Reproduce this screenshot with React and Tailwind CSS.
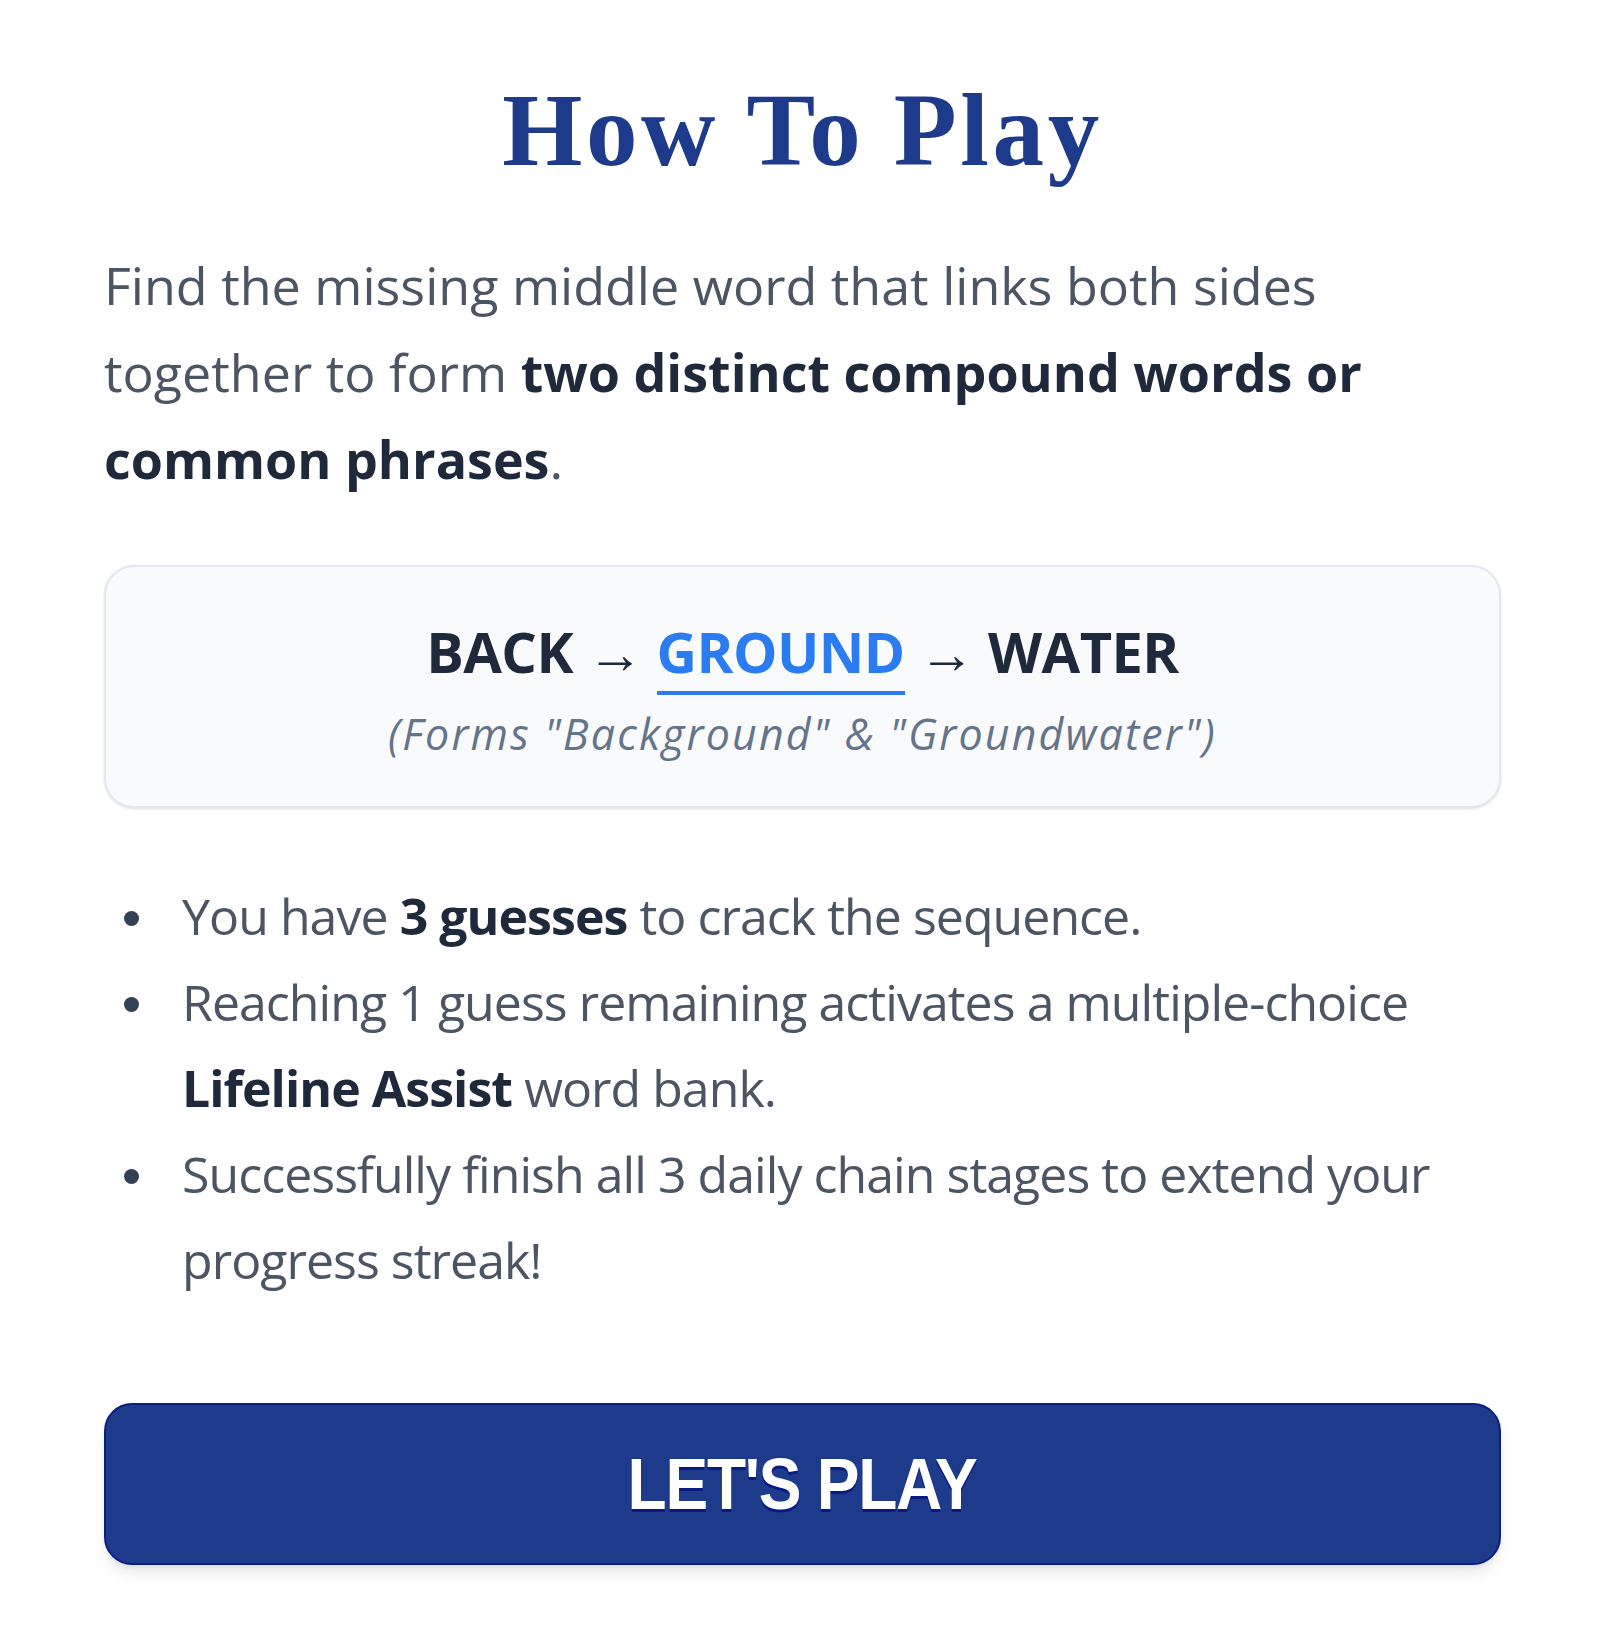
import React from "react";

const Bullet = ({ children }) => {
  return (
    <li className="flex">
      <div className="w-[78px] shrink-0 pl-[20px] pt-[38px]">
        <span className="block w-[15px] h-[15px] rounded-full bg-[#334155]"></span>
      </div>
      <div className="flex-1">{children}</div>
    </li>
  );
};

const HowToPlay = () => {
  return (
    <div className="min-h-screen bg-white">
      <div className="w-[1397px] ml-[104px] pt-[74px] pb-[67px]">
        {/* title */}
        <h1 className="text-center text-[103px] leading-[112px] font-bold text-[#1e3a8a] font-['Liberation_Serif',serif] tracking-[0.035em]">
          How To Play
        </h1>

        {/* intro */}
        <p className="mt-[55px] text-[52px] leading-[87px] text-[#4b5563] font-['Open_Sans',sans-serif]">
          Find the missing middle word that links both sides together to form{" "}
          <strong className="font-bold text-[#1e293b]">
            two distinct compound words or common phrases
          </strong>
          .
        </p>

        {/* example */}
        <div className="mt-[63px] h-[243px] rounded-[30px] border-2 border-[#e2e8f0] bg-[#f8fafc] shadow-sm flex flex-col items-center pt-[48px] font-['Open_Sans',sans-serif]">
          <div className="text-[56px] leading-[72px] font-bold text-[#1e293b] tracking-[-0.01em]">
            BACK <span className="font-normal">→</span>{" "}
            <span className="text-[#2b7cf0] border-b-[4px] border-[#2b7cf0] pb-[2px]">
              GROUND
            </span>{" "}
            <span className="font-normal">→</span> WATER
          </div>
          <div className="mt-[21px] text-[43px] leading-[52px] italic text-[#64748b] tracking-[0.05em]">
            (Forms "Background" &amp; "Groundwater")
          </div>
        </div>

        {/* rules */}
        <ul className="mt-[65px] text-[50px] leading-[86px] text-[#4b5563] font-['Open_Sans',sans-serif] tracking-[-0.019em]">
          <Bullet>
            You have <strong className="font-bold text-[#1e293b]">3 guesses</strong> to crack the sequence.
          </Bullet>
          <Bullet>
            Reaching 1 guess remaining activates a multiple-choice{" "}
            <strong className="font-bold text-[#1e293b]">Lifeline Assist</strong> word bank.
          </Bullet>
          <Bullet>
            Successfully finish all 3 daily chain stages to extend your progress streak!
          </Bullet>
        </ul>

        {/* play button */}
        <button className="mt-[100px] w-full h-[162px] rounded-[28px] bg-[#1e3a8a] border-2 border-[#0a1f86] shadow-lg flex items-center justify-center">
          <span className="inline-block scale-x-[0.89] text-[72px] leading-none font-bold text-white tracking-[-0.02em] font-['Liberation_Sans',sans-serif] [text-shadow:0_3px_0_#0a1a80]">
            LET'S PLAY
          </span>
        </button>
      </div>
    </div>
  );
};

export default HowToPlay;
